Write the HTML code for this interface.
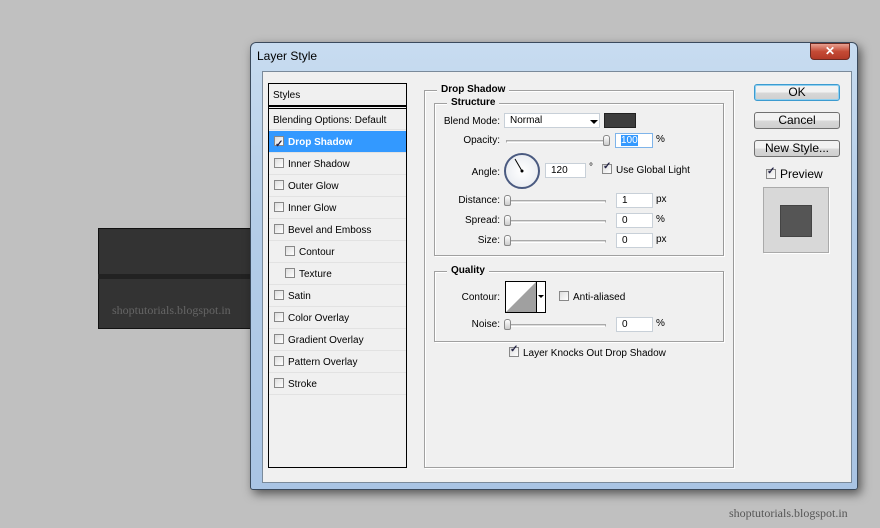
<!DOCTYPE html><html><head><style>
*{margin:0;padding:0;box-sizing:border-box}
body{width:880px;height:528px;background:#c0c0c0;position:relative;overflow:hidden;font-family:"Liberation Sans",sans-serif;font-size:10px;color:#000}
.a{position:absolute}
.win{left:250px;top:42px;width:608px;height:448px;background:linear-gradient(#c8dcf0,#b4cde8 40%,#a9c4e4);border:1px solid #3b4a5c;border-radius:6px 6px 3px 3px;box-shadow:3px 4px 10px rgba(0,0,0,.55)}
.cl{left:262px;top:71px;width:590px;height:412px;background:#f0f0f0;border:1px solid #7a8a9a}
.row{left:269px;width:137px;height:22px;line-height:23px;border-bottom:1px solid #e2e2e2;padding-left:5px}
.cb{display:inline-block;width:10px;height:10px;border:1px solid #888;background:linear-gradient(135deg,#ddd,#fff);vertical-align:-1px;margin-right:4px;position:relative}
.cb.c::after{content:"✓";position:absolute;left:0;top:-4px;font-size:10px;color:#224;font-weight:bold}
.grp{border:1px solid #a0a0a0;border-right-color:#999;box-shadow:inset 1px 1px 0 #fff,1px 1px 0 #fff}
.leg{background:#f0f0f0;font-weight:bold;padding:0 4px;font-size:10px}
.lab{text-align:right;width:60px}
.inp{background:#fff;border:1px solid #c8d0d8;height:15px;line-height:14px;padding-left:5px}
.sl{height:3px;border:1px solid #aaa;border-bottom-color:#fff;background:#ddd}
.th{width:7px;height:11px;border:1px solid #888;border-radius:3px 3px 2px 2px;background:linear-gradient(#fff,#ccc)}
.btn{left:754px;width:86px;height:17px;border:1px solid #707070;border-radius:3px;background:linear-gradient(#f2f2f2 50%,#d8d8d8 50%,#cfcfcf);text-align:center;line-height:15px;font-size:12px}
</style></head><body>
<div class="a" style="left:98px;top:228px;width:160px;height:101px;background:#333;border:1px solid #111"></div>
<div class="a" style="left:98px;top:274px;width:160px;height:5px;background:#222"></div>
<div class="a" style="left:112px;top:303px;font-family:'Liberation Serif',serif;font-size:12px;color:#666">shoptutorials.blogspot.in</div>
<div class="a" style="left:729px;top:506px;font-family:'Liberation Serif',serif;font-size:12px;color:#555">shoptutorials.blogspot.in</div>
<div class="a win"></div>
<div class="a" style="left:257px;top:49px;font-size:12px">Layer Style</div>
<div class="a" style="left:810px;top:43px;width:40px;height:17px;border:1px solid #6b2a22;border-radius:0 0 4px 4px;background:linear-gradient(#e8a090,#c44a35 50%,#b33a28);color:#fff;text-align:center;font-weight:bold;font-size:12px;line-height:15px">✕</div>
<div class="a cl"></div>
<div class="a" style="left:268px;top:83px;width:139px;height:385px;border:1px solid #000;background:#f0f0f0"></div>
<div class="a" style="left:269px;top:84px;width:137px;height:23px;border-bottom:2px solid #000;padding:6px 0 0 4px">Styles</div>
<div class="a row" style="top:108px;padding-left:4px;border-top:1px solid #000">Blending Options: Default</div>
<div class="a row" style="top:131px;background:#3399ff;color:#fff;font-weight:bold"><span class="cb c"></span>Drop Shadow</div>
<div class="a row" style="top:153px"><span class="cb"></span>Inner Shadow</div>
<div class="a row" style="top:175px"><span class="cb"></span>Outer Glow</div>
<div class="a row" style="top:197px"><span class="cb"></span>Inner Glow</div>
<div class="a row" style="top:219px"><span class="cb"></span>Bevel and Emboss</div>
<div class="a row" style="top:241px;padding-left:16px"><span class="cb"></span>Contour</div>
<div class="a row" style="top:263px;padding-left:16px"><span class="cb"></span>Texture</div>
<div class="a row" style="top:285px"><span class="cb"></span>Satin</div>
<div class="a row" style="top:307px"><span class="cb"></span>Color Overlay</div>
<div class="a row" style="top:329px"><span class="cb"></span>Gradient Overlay</div>
<div class="a row" style="top:351px"><span class="cb"></span>Pattern Overlay</div>
<div class="a row" style="top:373px"><span class="cb"></span>Stroke</div>
<div class="a grp" style="left:424px;top:90px;width:310px;height:378px"></div>
<div class="a leg" style="left:437px;top:84px">Drop Shadow</div>
<div class="a grp" style="left:434px;top:103px;width:290px;height:153px"></div>
<div class="a leg" style="left:447px;top:97px">Structure</div>
<div class="a lab" style="left:440px;top:116px">Blend Mode:</div>
<div class="a inp" style="left:504px;top:113px;width:96px">Normal</div>
<div class="a" style="left:590px;top:120px;border:4px solid transparent;border-top-color:#000;border-bottom:0"></div>
<div class="a" style="left:604px;top:113px;width:32px;height:15px;background:#3d3d3d;border:1px solid #222"></div>
<div class="a lab" style="left:440px;top:135px">Opacity:</div>
<div class="a sl" style="left:506px;top:140px;width:104px"></div>
<div class="a th" style="left:603px;top:135px"></div>
<div class="a inp" style="left:615px;top:133px;width:38px;border-color:#7eb4ea"><span style="background:#3399ff;color:#fff">100</span></div>
<div class="a" style="left:656px;top:134px">%</div>
<div class="a lab" style="left:440px;top:167px">Angle:</div>
<div class="a" style="left:504px;top:153px;width:36px;height:36px;border-radius:50%;border:2px solid #4a5a80;background:radial-gradient(#fff,#e4e8ee)"></div>
<svg class="a" style="left:504px;top:153px" width="36" height="36"><line x1="18" y1="18" x2="11" y2="6" stroke="#000" stroke-width="1"/><circle cx="18" cy="18" r="1.5"/></svg>
<div class="a inp" style="left:545px;top:163px;width:41px">120</div>
<div class="a" style="left:589px;top:162px">°</div>
<div class="a" style="left:602px;top:164px"><span class="cb c"></span>Use Global Light</div>
<div class="a lab" style="left:440px;top:195px">Distance:</div>
<div class="a lab" style="left:440px;top:215px">Spread:</div>
<div class="a lab" style="left:440px;top:235px">Size:</div>
<div class="a sl" style="left:506px;top:200px;width:100px"></div>
<div class="a sl" style="left:506px;top:220px;width:100px"></div>
<div class="a sl" style="left:506px;top:240px;width:100px"></div>
<div class="a th" style="left:504px;top:195px"></div>
<div class="a th" style="left:504px;top:215px"></div>
<div class="a th" style="left:504px;top:235px"></div>
<div class="a inp" style="left:616px;top:193px;width:37px">1</div>
<div class="a inp" style="left:616px;top:213px;width:37px">0</div>
<div class="a inp" style="left:616px;top:233px;width:37px">0</div>
<div class="a" style="left:656px;top:194px">px</div>
<div class="a" style="left:656px;top:214px">%</div>
<div class="a" style="left:656px;top:234px">px</div>
<div class="a grp" style="left:434px;top:271px;width:290px;height:71px"></div>
<div class="a leg" style="left:447px;top:265px">Quality</div>
<div class="a lab" style="left:440px;top:292px">Contour:</div>
<div class="a" style="left:505px;top:281px;width:41px;height:32px;border:1px solid #000;background:#fff"></div>
<svg class="a" style="left:506px;top:282px" width="30" height="30"><polygon points="0,30 30,0 30,30" fill="#a0a0a0"/></svg>
<div class="a" style="left:536px;top:282px;width:1px;height:30px;background:#000"></div>
<div class="a" style="left:538px;top:295px;border:3px solid transparent;border-top-color:#000;border-bottom:0"></div>
<div class="a" style="left:559px;top:291px"><span class="cb"></span>Anti-aliased</div>
<div class="a lab" style="left:440px;top:319px">Noise:</div>
<div class="a sl" style="left:506px;top:324px;width:100px"></div>
<div class="a th" style="left:504px;top:319px"></div>
<div class="a inp" style="left:616px;top:317px;width:37px">0</div>
<div class="a" style="left:656px;top:318px">%</div>
<div class="a" style="left:509px;top:347px"><span class="cb c"></span>Layer Knocks Out Drop Shadow</div>
<div class="a btn" style="top:84px;border-color:#3c9bd0;box-shadow:inset 0 0 0 1px #8fd0f0">OK</div>
<div class="a btn" style="top:112px">Cancel</div>
<div class="a btn" style="top:140px">New Style...</div>
<div class="a" style="left:766px;top:167px;font-size:12px"><span class="cb c"></span>Preview</div>
<div class="a" style="left:763px;top:187px;width:66px;height:66px;background:#d8d8d8;border:1px solid #aaa;box-shadow:1px 1px 0 #fff"></div>
<div class="a" style="left:780px;top:205px;width:32px;height:32px;background:#555;border:1px solid #444"></div>
</body></html>
